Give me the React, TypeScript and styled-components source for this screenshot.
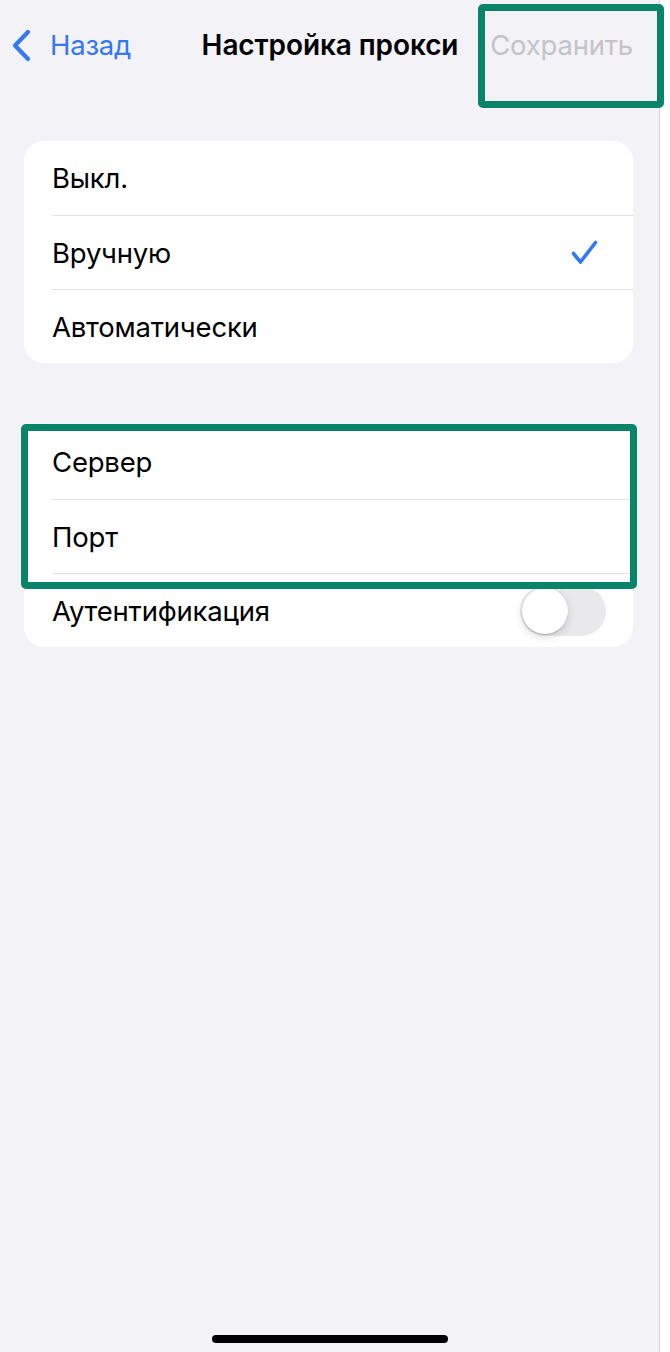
import React, { useState } from 'react';
import styled, { createGlobalStyle } from 'styled-components';

const GlobalStyle = createGlobalStyle`
  html, body {
    margin: 0;
    padding: 0;
    background: #ffffff;
  }
  body {
    font-family: Inter, "Noto Sans", "Liberation Sans", sans-serif;
    -webkit-font-smoothing: antialiased;
  }
`;

const ACCENT = '#3478f6';
const MARK = '#0a8468';

const Screen = styled.div`
  position: relative;
  width: 660px;
  min-height: 1352px;
  box-sizing: border-box;
  background: #f2f2f7;
  border-right: 1px solid #d6d6da;
  display: flex;
  flex-direction: column;
`;

const NavBar = styled.header`
  height: 90px;
  display: grid;
  grid-template-columns: 1fr auto 1fr;
  align-items: center;
  padding: 0 10px 0 11px;
`;

const BackButton = styled.button`
  justify-self: start;
  display: flex;
  align-items: center;
  gap: 18px;
  padding: 0;
  border: none;
  background: none;
  color: ${ACCENT};
  font: inherit;
  font-size: 27.5px;
  letter-spacing: -0.2px;
`;

const Title = styled.h1`
  margin: 0;
  font-size: 28px;
  font-weight: 600;
  color: #000;
  letter-spacing: -0.1px;
`;

const SaveButton = styled.button`
  justify-self: end;
  margin-right: 16px;
  padding: 0;
  border: none;
  background: none;
  font: inherit;
  font-size: 27.5px;
  color: #c4c4c6;
  letter-spacing: -0.2px;
`;

const Content = styled.main`
  display: flex;
  flex-direction: column;
  gap: 62px;
  padding: 51px 26px 0 24px;
`;

const Card = styled.section`
  background: #fff;
  border-radius: 20px;
  overflow: hidden;
`;

const Row = styled.div`
  height: 74px;
  display: flex;
  align-items: center;
  justify-content: space-between;
  margin-left: 28px;
  padding-right: 27px;
  box-sizing: border-box;
  font-size: 27.5px;
  color: #000;
  letter-spacing: -0.2px;
  & + & {
    border-top: 1px solid #e2e2e6;
  }
`;

const CheckSlot = styled.span`
  display: flex;
  padding-right: 8px;
`;

const Toggle = styled.button<{ on: boolean }>`
  position: relative;
  width: 86px;
  height: 50px;
  padding: 0;
  border: none;
  border-radius: 25px;
  background: ${({ on }) => (on ? '#34c759' : '#e9e9eb')};
  cursor: pointer;
  &::after {
    content: '';
    position: absolute;
    top: 2px;
    left: ${({ on }) => (on ? '38px' : '2px')};
    width: 46px;
    height: 46px;
    border-radius: 50%;
    background: #fff;
    box-shadow: 0 3px 8px rgba(0, 0, 0, 0.15), 0 1px 1px rgba(0, 0, 0, 0.16);
  }
`;

const Highlight = styled.div<{ top: number; left: number; w: number; h: number }>`
  position: absolute;
  top: ${({ top }) => top}px;
  left: ${({ left }) => left}px;
  width: ${({ w }) => w}px;
  height: ${({ h }) => h}px;
  box-sizing: border-box;
  border: 7px solid ${MARK};
  border-radius: 5px;
  pointer-events: none;
`;

const HomeBar = styled.div`
  margin: auto auto 9px;
  width: 236px;
  height: 8px;
  border-radius: 4px;
  background: #000;
`;

const Chevron = () => (
  <svg width="21" height="33" viewBox="0 0 21 33" fill="none">
    <path d="M17 3 L4 16.5 L17 30" stroke={ACCENT} strokeWidth="4.2" strokeLinecap="round" strokeLinejoin="round" />
  </svg>
);

const Check = () => (
  <svg width="27" height="25" viewBox="0 0 27 25" fill="none">
    <path d="M2.5 13.5 L9.5 22 L24.5 2.5" stroke={ACCENT} strokeWidth="3.6" strokeLinecap="round" strokeLinejoin="round" />
  </svg>
);

const modes = ['Выкл.', 'Вручную', 'Автоматически'];

export default function App() {
  const [mode, setMode] = useState(1);
  const [auth, setAuth] = useState(false);

  return (
    <Screen>
      <GlobalStyle />
      <NavBar>
        <BackButton>
          <Chevron />
          Назад
        </BackButton>
        <Title>Настройка прокси</Title>
        <SaveButton disabled>Сохранить</SaveButton>
      </NavBar>

      <Content>
        <Card>
          {modes.map((m, i) => (
            <Row key={m} onClick={() => setMode(i)}>
              {m}
              {mode === i && (
                <CheckSlot>
                  <Check />
                </CheckSlot>
              )}
            </Row>
          ))}
        </Card>

        <Card>
          <Row>Сервер</Row>
          <Row>Порт</Row>
          <Row>
            Аутентификация
            <Toggle on={auth} onClick={() => setAuth(!auth)} aria-label="Аутентификация" />
          </Row>
        </Card>
      </Content>

      <HomeBar />

      <Highlight top={4} left={478} w={186} h={104} />
      <Highlight top={424} left={21} w={616} h={165} />
    </Screen>
  );
}
